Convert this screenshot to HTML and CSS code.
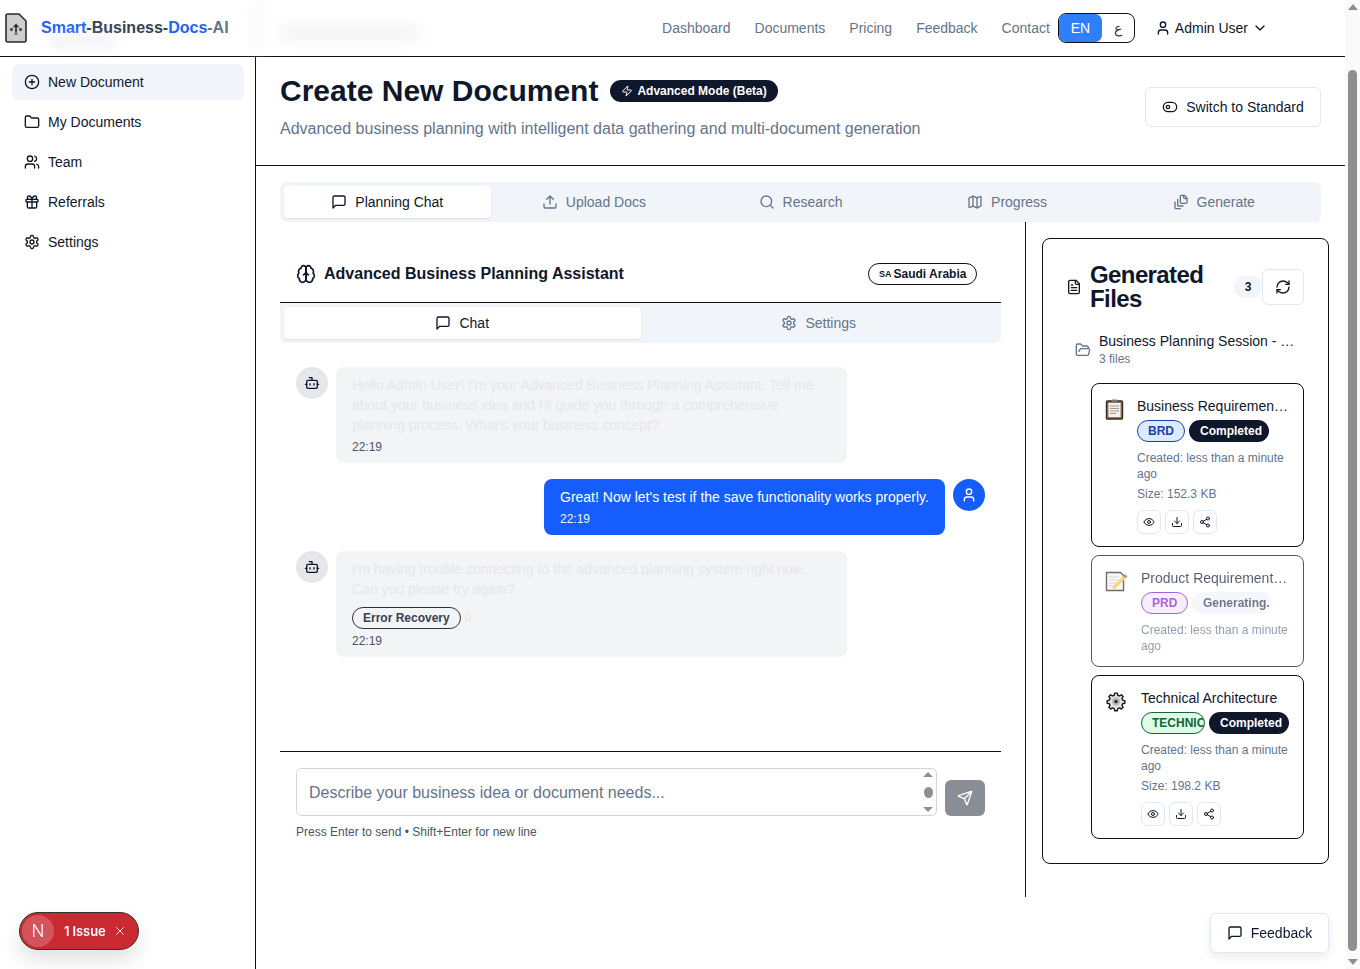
FILE: index.html
```html
<!DOCTYPE html>
<html>
<head>
<meta charset="utf-8">
<title>Smart-Business-Docs-AI</title>
<link rel="stylesheet" href="styles.css">
</head>
<body>

<svg class="sprite" xmlns="http://www.w3.org/2000/svg">
	<symbol id="i-plus" viewBox="0 0 24 24"><circle cx="12" cy="12" r="10"/><path d="M8 12h8M12 8v8"/></symbol>
	<symbol id="i-folder" viewBox="0 0 24 24"><path d="M20 20a2 2 0 0 0 2-2V8a2 2 0 0 0-2-2h-7.9a2 2 0 0 1-1.69-.9L9.6 3.9A2 2 0 0 0 7.93 3H4a2 2 0 0 0-2 2v13a2 2 0 0 0 2 2Z"/></symbol>
	<symbol id="i-users" viewBox="0 0 24 24"><path d="M16 21v-2a4 4 0 0 0-4-4H6a4 4 0 0 0-4 4v2"/><circle cx="9" cy="7" r="4"/><path d="M22 21v-2a4 4 0 0 0-3-3.87M16 3.13a4 4 0 0 1 0 7.75"/></symbol>
	<symbol id="i-gift" viewBox="0 0 24 24"><rect x="3" y="8" width="18" height="4" rx="1"/><path d="M12 8v13M19 12v7a2 2 0 0 1-2 2H7a2 2 0 0 1-2-2v-7M7.5 8a2.5 2.5 0 0 1 0-5A4.8 8 0 0 1 12 8a4.8 8 0 0 1 4.5-5 2.5 2.5 0 0 1 0 5"/></symbol>
	<symbol id="i-settings" viewBox="0 0 24 24"><path d="M12.22 2h-.44a2 2 0 0 0-2 2v.18a2 2 0 0 1-1 1.73l-.43.25a2 2 0 0 1-2 0l-.15-.08a2 2 0 0 0-2.73.73l-.22.38a2 2 0 0 0 .73 2.73l.15.1a2 2 0 0 1 1 1.72v.51a2 2 0 0 1-1 1.74l-.15.09a2 2 0 0 0-.73 2.73l.22.38a2 2 0 0 0 2.73.73l.15-.08a2 2 0 0 1 2 0l.43.25a2 2 0 0 1 1 1.73V20a2 2 0 0 0 2 2h.44a2 2 0 0 0 2-2v-.18a2 2 0 0 1 1-1.73l.43-.25a2 2 0 0 1 2 0l.15.08a2 2 0 0 0 2.73-.73l.22-.39a2 2 0 0 0-.73-2.73l-.15-.08a2 2 0 0 1-1-1.74v-.5a2 2 0 0 1 1-1.74l.15-.09a2 2 0 0 0 .73-2.73l-.22-.38a2 2 0 0 0-2.73-.73l-.15.08a2 2 0 0 1-2 0l-.43-.25a2 2 0 0 1-1-1.73V4a2 2 0 0 0-2-2z"/><circle cx="12" cy="12" r="3"/></symbol>
	<symbol id="i-message" viewBox="0 0 24 24"><path d="M21 15a2 2 0 0 1-2 2H7l-4 4V5a2 2 0 0 1 2-2h14a2 2 0 0 1 2 2z"/></symbol>
	<symbol id="i-upload" viewBox="0 0 24 24"><path d="M21 15v4a2 2 0 0 1-2 2H5a2 2 0 0 1-2-2v-4M17 8l-5-5-5 5M12 3v12"/></symbol>
	<symbol id="i-search" viewBox="0 0 24 24"><circle cx="11" cy="11" r="8"/><path d="m21 21-4.3-4.3"/></symbol>
	<symbol id="i-map" viewBox="0 0 24 24"><path d="M14.106 5.553a2 2 0 0 0 1.788 0l3.659-1.83A1 1 0 0 1 21 4.619v12.764a1 1 0 0 1-.553.894l-4.553 2.277a2 2 0 0 1-1.788 0l-4.212-2.106a2 2 0 0 0-1.788 0l-3.659 1.83A1 1 0 0 1 3 19.381V6.618a1 1 0 0 1 .553-.894l4.553-2.277a2 2 0 0 1 1.788 0z"/><path d="M15 5.764v15M9 3.236v15"/></symbol>
	<symbol id="i-stack" viewBox="0 0 24 24"><path d="M21 7h-3a2 2 0 0 1-2-2V2"/><path d="M21 6v6.5c0 .8-.7 1.5-1.5 1.5h-7c-.8 0-1.5-.7-1.5-1.5v-9c0-.8.7-1.5 1.5-1.5H17Z"/><path d="M7 8v8.8c0 .3.2.6.4.8.2.2.5.4.8.4H15M3 12v8.8c0 .3.2.6.4.8.2.2.5.4.8.4H11"/></symbol>
	<symbol id="i-zap" viewBox="0 0 24 24"><path d="M4 14a1 1 0 0 1-.78-1.63l9.9-10.2a.5.5 0 0 1 .86.46l-1.92 6.02A1 1 0 0 0 13 10h7a1 1 0 0 1 .78 1.63l-9.9 10.2a.5.5 0 0 1-.86-.46l1.92-6.02A1 1 0 0 0 11 14z"/></symbol>
	<symbol id="i-toggle" viewBox="0 0 24 24"><rect x="2" y="5" width="20" height="14" rx="7"/><circle cx="9" cy="12" r="2.5"/></symbol>
	<symbol id="i-brain" viewBox="0 0 24 24"><path d="M12 5a3 3 0 1 0-5.997.125 4 4 0 0 0-2.526 5.77 4 4 0 0 0 .556 6.588A4 4 0 1 0 12 18Z"/><path d="M12 5a3 3 0 1 1 5.997.125 4 4 0 0 1 2.526 5.77 4 4 0 0 1-.556 6.588A4 4 0 1 1 12 18Z"/><path d="M15 13a4.5 4.5 0 0 1-3-4 4.5 4.5 0 0 1-3 4M12 9v9"/></symbol>
	<symbol id="i-bot" viewBox="0 0 24 24"><path d="M12 8V4H8"/><rect x="4" y="8" width="16" height="12" rx="2"/><path d="M2 14h2M20 14h2M15 13v2M9 13v2"/></symbol>
	<symbol id="i-user" viewBox="0 0 24 24"><path d="M19 21v-2a4 4 0 0 0-4-4H9a4 4 0 0 0-4 4v2"/><circle cx="12" cy="7" r="4"/></symbol>
	<symbol id="i-send" viewBox="0 0 24 24"><path d="M14.536 21.686a.5.5 0 0 0 .937-.024l6.5-19a.496.496 0 0 0-.635-.635l-19 6.5a.5.5 0 0 0-.024.937l7.93 3.18a2 2 0 0 1 1.112 1.11z"/><path d="m21.854 2.147-10.94 10.939"/></symbol>
	<symbol id="i-file" viewBox="0 0 24 24"><path d="M15 2H6a2 2 0 0 0-2 2v16a2 2 0 0 0 2 2h12a2 2 0 0 0 2-2V7Z"/><path d="M14 2v4a2 2 0 0 0 2 2h4M10 9H8M16 13H8M16 17H8"/></symbol>
	<symbol id="i-refresh" viewBox="0 0 24 24"><path d="M3 12a9 9 0 0 1 9-9 9.75 9.75 0 0 1 6.74 2.74L21 8"/><path d="M21 3v5h-5"/><path d="M21 12a9 9 0 0 1-9 9 9.75 9.75 0 0 1-6.74-2.74L3 16"/><path d="M8 16H3v5"/></symbol>
	<symbol id="i-open" viewBox="0 0 24 24"><path d="m6 14 1.5-2.9A2 2 0 0 1 9.24 10H20a2 2 0 0 1 1.94 2.5l-1.54 6a2 2 0 0 1-1.95 1.5H4a2 2 0 0 1-2-2V5a2 2 0 0 1 2-2h3.9a2 2 0 0 1 1.69.9l.81 1.2a2 2 0 0 0 1.67.9H18a2 2 0 0 1 2 2v2"/></symbol>
	<symbol id="i-eye" viewBox="0 0 24 24"><path d="M2.062 12.348a1 1 0 0 1 0-.696 10.75 10.75 0 0 1 19.876 0 1 1 0 0 1 0 .696 10.75 10.75 0 0 1-19.876 0"/><circle cx="12" cy="12" r="3"/></symbol>
	<symbol id="i-download" viewBox="0 0 24 24"><path d="M21 15v4a2 2 0 0 1-2 2H5a2 2 0 0 1-2-2v-4M7 10l5 5 5-5M12 15V3"/></symbol>
	<symbol id="i-share" viewBox="0 0 24 24"><circle cx="18" cy="5" r="3"/><circle cx="6" cy="12" r="3"/><circle cx="18" cy="19" r="3"/><path d="m8.59 13.51 6.83 3.98M15.41 6.51l-6.82 3.98"/></symbol>
	<symbol id="i-chevron" viewBox="0 0 24 24"><path d="m6 9 6 6 6-6"/></symbol>
	<symbol id="i-x" viewBox="0 0 24 24"><path d="M18 6 6 18M6 6l12 12"/></symbol>
</svg>

<div class="app">
	<div class="page">

		<header class="topbar">
			<div class="logo">
				<svg class="logo-mark" viewBox="0 0 22 30">
					<path d="M3 1h11l7 7v19a2 2 0 0 1-2 2H3a2 2 0 0 1-2-2V3a2 2 0 0 1 2-2z" fill="#cfcfcf" stroke="#2b2b2b" stroke-width="1.6"/>
					<path d="M11 10.500l3.200 3.700h-6.400z" fill="#2b2b2b"/>
					<path d="M11 14v5" stroke="#444" stroke-width="2"/>
					<circle cx="6.500" cy="16.500" r="1.700" fill="#555"/>
					<circle cx="15.500" cy="16.500" r="1.700" fill="#555"/>
					<circle cx="11" cy="20.500" r="1.500" fill="#666"/>
				</svg>
				<span class="brand"><b class="blue">Smart</b><b class="slate">-Business-</b><b class="blue">Docs</b><b class="grey">-AI</b></span>
			</div>
			<div class="logo-smudge"></div>
			<div class="edge-smudge"></div>
			<div class="top-smudge"></div>
			<nav class="topnav">
				<a>Dashboard</a>
				<a>Documents</a>
				<a>Pricing</a>
				<a>Feedback</a>
				<a>Contact</a>
			</nav>
			<div class="lang">
				<span class="lang-on">EN</span>
				<span class="lang-off">ع</span>
			</div>
			<div class="account">
				<svg class="i"><use href="#i-user"/></svg>
				<span>Admin User</span>
				<svg class="i"><use href="#i-chevron"/></svg>
			</div>
		</header>

		<div class="body">
			<aside class="sidebar">
				<a class="side-item active"><svg class="i"><use href="#i-plus"/></svg>New Document</a>
				<a class="side-item"><svg class="i"><use href="#i-folder"/></svg>My Documents</a>
				<a class="side-item"><svg class="i"><use href="#i-users"/></svg>Team</a>
				<a class="side-item"><svg class="i"><use href="#i-gift"/></svg>Referrals</a>
				<a class="side-item"><svg class="i"><use href="#i-settings"/></svg>Settings</a>
			</aside>

			<main class="main">
				<div class="main-head">
					<div>
						<div class="title-row">
							<h1>Create New Document</h1>
							<span class="beta"><svg class="i"><use href="#i-zap"/></svg>Advanced Mode (Beta)</span>
						</div>
						<p class="subtitle">Advanced business planning with intelligent data gathering and multi-document generation</p>
					</div>
					<button class="switch"><svg class="i"><use href="#i-toggle"/></svg>Switch to Standard</button>
				</div>

				<div class="content">
					<div class="tabs">
						<div class="tab active"><svg class="i"><use href="#i-message"/></svg>Planning Chat</div>
						<div class="tab"><svg class="i"><use href="#i-upload"/></svg>Upload Docs</div>
						<div class="tab"><svg class="i"><use href="#i-search"/></svg>Research</div>
						<div class="tab"><svg class="i"><use href="#i-map"/></svg>Progress</div>
						<div class="tab"><svg class="i"><use href="#i-stack"/></svg>Generate</div>
					</div>

					<div class="workspace">
						<section class="chat-col">
							<div class="chat-head">
								<h2><svg class="i brain"><use href="#i-brain"/></svg>Advanced Business Planning Assistant</h2>
								<span class="country"><small>SA</small>Saudi Arabia</span>
							</div>
							<div class="subtabs">
								<div class="tab active"><svg class="i"><use href="#i-message"/></svg>Chat</div>
								<div class="tab"><svg class="i"><use href="#i-settings"/></svg>Settings</div>
							</div>

							<div class="messages">
								<div class="msg">
									<div class="avatar"><svg class="i"><use href="#i-bot"/></svg></div>
									<div class="bubble">
										<p>Hello Admin User! I'm your Advanced Business Planning Assistant. Tell me about your business idea and I'll guide you through a comprehensive planning process. What's your business concept?</p>
										<div class="time">22:19</div>
									</div>
								</div>
								<div class="msg mine">
									<div class="bubble">
										<p>Great! Now let's test if the save functionality works properly.</p>
										<div class="time">22:19</div>
									</div>
									<div class="avatar"><svg class="i"><use href="#i-user"/></svg></div>
								</div>
								<div class="msg">
									<div class="avatar"><svg class="i"><use href="#i-bot"/></svg></div>
									<div class="bubble">
										<p>I'm having trouble connecting to the advanced planning system right now. Can you please try again?</p>
										<div class="recovery"><span class="pill-tag">Error Recovery</span><span class="zero">0</span></div>
										<div class="time">22:19</div>
									</div>
								</div>
							</div>

							<div class="composer">
								<div class="composer-row">
									<div class="field">
										<textarea placeholder="Describe your business idea or document needs..."></textarea>
										<div class="field-scroll"><i class="up"></i><i class="dot"></i><i class="down"></i></div>
									</div>
									<button class="send"><svg class="i"><use href="#i-send"/></svg></button>
								</div>
								<p class="hint">Press Enter to send • Shift+Enter for new line</p>
							</div>
						</section>

						<aside class="files">
							<div class="files-head">
								<svg class="i"><use href="#i-file"/></svg>
								<h3>Generated Files</h3>
								<span class="count">3</span>
								<button class="refresh"><svg class="i"><use href="#i-refresh"/></svg></button>
							</div>

							<div class="session">
								<svg class="i"><use href="#i-open"/></svg>
								<div class="session-text">
									<div class="session-name">Business Planning Session - 22:19</div>
									<div class="session-count">3 files</div>
								</div>
							</div>

							<div class="cards">
								<div class="card">
									<svg class="doc-icon" viewBox="0 0 21 24">
										<rect x="2.500" y="5" width="16" height="18" rx="1" fill="#a8754a" stroke="#2f2a26" stroke-width="1.400"/>
										<rect x="4.500" y="7" width="12" height="14" fill="#f1f1ee"/>
										<path d="M6 10h9M6 12.500h9M6 15h9M6 17.500h6" stroke="#9a9a9a" stroke-width="1"/>
										<rect x="7.500" y="3.500" width="6" height="3" rx="1" fill="#777"/>
									</svg>
									<div class="card-body">
										<div class="card-title">Business Requirements Document</div>
										<div class="tags"><span class="tag brd">BRD</span><span class="tag done">Completed</span></div>
										<div class="meta">Created: less than a minute ago</div>
										<div class="meta size">Size: 152.3 KB</div>
										<div class="actions">
											<button><svg class="i"><use href="#i-eye"/></svg></button>
											<button><svg class="i"><use href="#i-download"/></svg></button>
											<button><svg class="i"><use href="#i-share"/></svg></button>
										</div>
									</div>
								</div>

								<div class="card busy">
									<svg class="doc-icon wide" viewBox="0 0 25 24">
										<path d="M2.500 4.500h14l3 3v15h-17z" fill="#f6f6f4" stroke="#2f2f2f" stroke-width="1.400"/>
										<path d="M5 9h10M5 12h10M5 15h7M5 18h5" stroke="#c4c4c4" stroke-width="1"/>
										<path d="M9 18l10-10 2.500 2.500-10 10-3.500 1z" fill="#f5c64f"/>
										<path d="M19 8l2-2 2.500 2.500-2 2z" fill="#b3635c"/>
									</svg>
									<div class="card-body">
										<div class="card-title">Product Requirements Document</div>
										<div class="tags"><span class="tag prd">PRD</span><span class="tag generating">Generating.</span></div>
										<div class="meta">Created: less than a minute ago</div>
									</div>
								</div>

								<div class="card">
									<svg class="doc-icon wide" viewBox="0 0 25 24">
										<g transform="translate(12 13.500) scale(.84) translate(-12.500 -12)">
											<path d="M11 2h3l.6 2.600 2 .8 2.300-1.400 2.100 2.100-1.400 2.300.8 2 2.600.6v3l-2.600.6-.8 2 1.400 2.300-2.100 2.100-2.300-1.400-2 .8-.6 2.600h-3l-.6-2.600-2-.8-2.300 1.400-2.100-2.100 1.400-2.300-.8-2-2.600-.6v-3l2.600-.6.8-2-1.400-2.300 2.100-2.100 2.300 1.400 2-.8z" fill="#e4e4e4" stroke="#1c1c1c" stroke-width="1.700" stroke-linejoin="round"/>
											<circle cx="12.500" cy="12" r="5" fill="#bdbdbd"/>
											<circle cx="12.500" cy="12" r="2.200" fill="#333"/>
										</g>
									</svg>
									<div class="card-body">
										<div class="card-title">Technical Architecture</div>
										<div class="tags"><span class="tag tech">TECHNICAL</span><span class="tag done">Completed</span></div>
										<div class="meta">Created: less than a minute ago</div>
										<div class="meta size">Size: 198.2 KB</div>
										<div class="actions">
											<button><svg class="i"><use href="#i-eye"/></svg></button>
											<button><svg class="i"><use href="#i-download"/></svg></button>
											<button><svg class="i"><use href="#i-share"/></svg></button>
										</div>
									</div>
								</div>
							</div>
						</aside>
					</div>
				</div>
			</main>
		</div>
	</div>

	<div class="scrollbar">
		<i class="arrow-up"></i>
		<div class="thumb"></div>
		<i class="arrow-down"></i>
	</div>
</div>

<div class="issues">
	<span class="issues-n">N</span>
	<span class="issues-text">1 Issue</span>
	<svg class="i"><use href="#i-x"/></svg>
</div>

<button class="feedback"><svg class="i"><use href="#i-message"/></svg>Feedback</button>

</body>
</html>
```

FILE: styles.css
```css
* {
	box-sizing: border-box;
}

html, body {
	height: 100%;
}

body, h1, h2, h3, p {
	margin: 0;
	padding: 0;
}

body {
	font-family: "Liberation Sans", Arial, sans-serif;
	font-size: 14px;
	line-height: 20px;
	color: #0f172a;
	background: #fff;
	overflow: hidden;
}

button {
	font: inherit;
	color: inherit;
	background: #fff;
	cursor: pointer;
}

.sprite {
	display: none;
}

.i {
	width: 16px;
	height: 16px;
	flex-shrink: 0;
	fill: none;
	stroke: currentColor;
	stroke-width: 2;
	stroke-linecap: round;
	stroke-linejoin: round;
}

.app {
	display: flex;
	height: 969px;
}

.page {
	flex: 1;
	min-width: 0;
	display: flex;
	flex-direction: column;
}

/* top bar */
.topbar {
	position: relative;
	height: 57px;
	flex-shrink: 0;
	display: flex;
	align-items: center;
	padding: 0 77px 0 5px;
	border-bottom: 1px solid #111;
}

.logo {
	display: flex;
	align-items: center;
	gap: 14px;
}

.logo-mark {
	width: 22px;
	height: 30px;
}

.brand {
	font-size: 16px;
	line-height: 24px;
}

.brand b {
	font-weight: 700;
}

.blue { color: #1d63f5; }
.slate { color: #334155; }
.grey { color: #64748b; }

.top-smudge {
	position: absolute;
	left: 280px;
	top: 25px;
	width: 140px;
	height: 16px;
	background: #e5e7eb;
	filter: blur(7px);
	opacity: .45;
}

.logo-smudge {
	position: absolute;
	left: 50px;
	top: 37px;
	width: 65px;
	height: 10px;
	background: #e5e7eb;
	filter: blur(6px);
	opacity: .6;
}

.edge-smudge {
	position: absolute;
	left: 250px;
	top: 0;
	width: 14px;
	height: 54px;
	background: #f3f4f6;
	filter: blur(4px);
	opacity: .4;
}

.topnav {
	margin-left: auto;
	display: flex;
	gap: 24px;
	color: #64748b;
}

.lang {
	margin-left: 8px;
	width: 77px;
	height: 30px;
	display: flex;
	align-items: center;
	border: 1px solid #111;
	border-radius: 8px;
}

.lang-on {
	width: 43px;
	height: 28px;
	display: flex;
	align-items: center;
	justify-content: center;
	background: #2f7ffb;
	color: #fff;
	font-weight: 500;
	border-radius: 7px;
}

.lang-off {
	flex: 1;
	text-align: center;
	color: #334155;
}

.account {
	margin-left: 20px;
	display: flex;
	align-items: center;
	gap: 4px;
}

.body {
	flex: 1;
	min-height: 0;
	display: flex;
}

/* sidebar */
.sidebar {
	width: 256px;
	flex-shrink: 0;
	border-right: 1px solid #111;
	padding: 7px 11px 0 12px;
	display: flex;
	flex-direction: column;
	gap: 4px;
}

.side-item {
	height: 36px;
	display: flex;
	align-items: center;
	gap: 8px;
	padding: 0 12px;
	border-radius: 8px;
}

.side-item.active {
	background: #f1f5f9;
}

/* main */
.main {
	flex: 1;
	min-width: 0;
}

.main-head {
	height: 109px;
	padding: 16px 24px 24px;
	display: flex;
	align-items: center;
	justify-content: space-between;
	border-bottom: 1px solid #111;
}

.title-row {
	display: flex;
	align-items: center;
	gap: 12px;
}

h1 {
	font-size: 30px;
	line-height: 36px;
	font-weight: 700;
}

.beta {
	height: 22px;
	display: flex;
	align-items: center;
	gap: 4px;
	padding: 0 11px;
	border-radius: 11px;
	background: #0f172a;
	color: #fff;
	font-size: 12px;
	line-height: 16px;
	font-weight: 700;
}

.beta .i {
	width: 12px;
	height: 12px;
}

.subtitle {
	margin-top: 8px;
	font-size: 16px;
	line-height: 24px;
	color: #64748b;
}

.switch {
	width: 176px;
	height: 40px;
	display: flex;
	align-items: center;
	justify-content: center;
	gap: 8px;
	border: 1px solid #e2e8f0;
	border-radius: 6px;
}

.content {
	padding: 16px 24px 0;
}

.tabs {
	height: 40px;
	padding: 4px;
	display: grid;
	grid-template-columns: repeat(5, 1fr);
	background: #f1f5f9;
	border-radius: 6px;
}

.tab {
	display: flex;
	align-items: center;
	justify-content: center;
	gap: 8px;
	color: #64748b;
	border-radius: 4px;
}

.tab.active {
	background: #fff;
	color: #0f172a;
	box-shadow: 0 1px 2px rgba(0,0,0,.08);
}

.workspace {
	display: grid;
	grid-template-columns: 746px 287px;
	gap: 16px;
	align-items: start;
}

/* chat column */
.chat-col {
	height: 675px;
	padding-right: 24px;
	border-right: 1px solid #111;
	display: flex;
	flex-direction: column;
}

.chat-head {
	height: 81px;
	flex-shrink: 0;
	padding: 24px 24px 0 16px;
	display: flex;
	align-items: center;
	justify-content: space-between;
	border-bottom: 1px solid #111;
}

h2 {
	display: flex;
	align-items: center;
	gap: 8px;
	font-size: 16px;
	line-height: 24px;
	font-weight: 700;
}

.brain {
	width: 20px;
	height: 20px;
}

.country {
	width: 109px;
	height: 22px;
	display: flex;
	align-items: center;
	gap: 2px;
	padding-left: 10px;
	border: 1px solid #111;
	border-radius: 11px;
	font-size: 12px;
	font-weight: 700;
}

.country small {
	font-size: 9px;
	font-weight: 700;
}

.subtabs {
	height: 40px;
	flex-shrink: 0;
	padding: 4px;
	display: grid;
	grid-template-columns: 1fr 1fr;
	background: #f1f5f9;
	border-radius: 0 0 6px 6px;
}

.messages {
	flex: 1;
	padding: 24px 16px;
	display: flex;
	flex-direction: column;
	gap: 16px;
}

.msg {
	display: flex;
	gap: 8px;
	align-items: flex-start;
}

.msg.mine {
	justify-content: flex-end;
}

.avatar {
	width: 32px;
	height: 32px;
	flex-shrink: 0;
	display: flex;
	align-items: center;
	justify-content: center;
	border-radius: 50%;
	background: #e5e7eb;
}

.mine .avatar {
	background: #155dfc;
	color: #fff;
}

.bubble {
	width: 511px;
	padding: 8px 16px;
	border-radius: 8px;
	background: #f3f4f6;
	color: #e5e7eb;
}

.mine .bubble {
	width: 401px;
	background: #155dfc;
	color: #fff;
}

.time {
	margin-top: 4px;
	font-size: 12px;
	line-height: 16px;
	color: #4b5563;
}

.mine .time {
	color: #eef2ff;
}

.recovery {
	margin-top: 8px;
	display: flex;
	align-items: center;
	gap: 4px;
}

.pill-tag {
	height: 22px;
	display: flex;
	align-items: center;
	padding: 0 10px;
	border: 1px solid #333;
	border-radius: 11px;
	color: #374151;
	font-size: 12px;
	font-weight: 700;
}

.zero {
	font-size: 12px;
}

.composer {
	flex-shrink: 0;
	height: 146px;
	padding: 16px;
	border-top: 1px solid #111;
}

.composer-row {
	display: flex;
	align-items: flex-end;
	gap: 8px;
}

.field {
	position: relative;
	flex: 1;
	height: 48px;
}

.field textarea {
	display: block;
	width: 100%;
	height: 48px;
	padding: 12px;
	border: 1px solid #d1d5db;
	border-radius: 6px;
	font: 16px/24px "Liberation Sans", Arial, sans-serif;
	resize: none;
	overflow: hidden;
	outline: none;
}

.field textarea::placeholder {
	color: #64748b;
	opacity: 1;
}

.field-scroll {
	position: absolute;
	top: 4px;
	right: 4px;
	bottom: 4px;
	width: 10px;
	display: flex;
	flex-direction: column;
	align-items: center;
	justify-content: space-between;
}

.field-scroll .dot {
	width: 9px;
	height: 11px;
	border-radius: 50%;
	background: #8f8f8f;
}

.field-scroll .up,
.field-scroll .down {
	width: 0;
	height: 0;
	border-left: 5px solid transparent;
	border-right: 5px solid transparent;
}

.field-scroll .up { border-bottom: 5px solid #8f8f8f; }
.field-scroll .down { border-top: 5px solid #8f8f8f; }

.send {
	width: 40px;
	height: 36px;
	display: flex;
	align-items: center;
	justify-content: center;
	border: 0;
	border-radius: 6px;
	background: #898e96;
	color: #fff;
}

.hint {
	margin-top: 8px;
	font-size: 12px;
	line-height: 16px;
	color: #4b5563;
}

/* generated files */
.files {
	margin-top: 16px;
	padding: 24px;
	border: 1px solid #111;
	border-radius: 8px;
}

.files-head {
	display: flex;
	align-items: center;
}

.files-head > .i {
	margin-left: -1px;
}

h3 {
	flex: 1;
	margin-left: 8px;
	font-size: 24px;
	line-height: 24px;
	font-weight: 700;
	letter-spacing: -.6px;
}

.count {
	width: 28px;
	height: 22px;
	display: flex;
	align-items: center;
	justify-content: center;
	border-radius: 11px;
	background: #f1f5f9;
	font-size: 12px;
	font-weight: 700;
}

.refresh {
	width: 42px;
	height: 36px;
	display: flex;
	align-items: center;
	justify-content: center;
	border: 1px solid #e2e8f0;
	border-radius: 6px;
}

.session {
	margin-top: 12px;
	padding: 8px;
	display: flex;
	align-items: center;
	gap: 8px;
}

.session > .i {
	color: #64748b;
	margin-top: 2px;
}

.session-text {
	min-width: 0;
}

.session-name {
	white-space: nowrap;
	overflow: hidden;
	text-overflow: ellipsis;
}

.session-count {
	font-size: 12px;
	line-height: 16px;
	color: #64748b;
}

.cards {
	margin: 8px 0 0 24px;
	display: flex;
	flex-direction: column;
	gap: 8px;
}

.card {
	padding: 12px;
	display: flex;
	gap: 12px;
	border: 1px solid #111;
	border-radius: 8px;
}

.card.busy {
	opacity: .7;
}

.doc-icon {
	width: 21px;
	height: 24px;
	flex-shrink: 0;
}

.doc-icon.wide {
	width: 25px;
}

.card-body {
	flex: 1;
	min-width: 0;
}

.card-title {
	white-space: nowrap;
	overflow: hidden;
	text-overflow: ellipsis;
}

.tags {
	margin-top: 4px;
	display: flex;
	gap: 4px;
}

.tag {
	height: 22px;
	display: flex;
	align-items: center;
	flex-shrink: 0;
	padding-left: 10px;
	border: 1px solid transparent;
	border-radius: 11px;
	font-size: 12px;
	font-weight: 700;
	white-space: nowrap;
	overflow: hidden;
}

.brd {
	width: 48px;
	background: #dbeafe;
	border-color: #1e40af;
	color: #1e40af;
}

.prd {
	width: 47px;
	background: #f3e8ff;
	border-color: #7e22ce;
	color: #7e22ce;
}

.tech {
	width: 64px;
	background: #dcfce7;
	border-color: #166534;
	color: #166534;
}

.done {
	width: 80px;
	background: #0f172a;
	color: #fff;
}

.generating {
	width: 80px;
	background: #f1f5f9;
	color: #334155;
}

.meta {
	margin-top: 8px;
	font-size: 12px;
	line-height: 16px;
	color: #64748b;
}

.meta.size {
	margin-top: 4px;
}

.actions {
	margin-top: 8px;
	display: flex;
	gap: 4px;
}

.actions button {
	width: 24px;
	height: 24px;
	padding: 0;
	display: flex;
	align-items: center;
	justify-content: center;
	border: 1px solid #e2e8f0;
	border-radius: 6px;
}

.actions .i {
	width: 12px;
	height: 12px;
}

/* fake browser scrollbar */
.scrollbar {
	width: 15px;
	flex-shrink: 0;
	display: flex;
	flex-direction: column;
	align-items: center;
	padding: 4px 0;
	background: #fafafa;
}

.arrow-up,
.arrow-down {
	width: 0;
	height: 0;
	border-left: 5px solid transparent;
	border-right: 5px solid transparent;
}

.arrow-up { border-bottom: 6px solid #8f8f8f; }
.arrow-down { border-top: 6px solid #8f8f8f; }

.thumb {
	width: 9px;
	flex: 1;
	margin: 60px 0 8px;
	border-radius: 5px;
	background: #8f8f8f;
}

/* floating bits */
.issues {
	position: fixed;
	left: 19px;
	top: 912px;
	width: 120px;
	height: 38px;
	display: flex;
	align-items: center;
	padding: 0 3px 0 2px;
	border: 1px solid #333;
	border-radius: 19px;
	background: #c92a32;
	color: #fff;
	font-family: Inter, "Liberation Sans", sans-serif;
	box-shadow: 0 10px 20px rgba(0,0,0,.12);
}

.issues-n {
	width: 32px;
	height: 32px;
	display: flex;
	align-items: center;
	justify-content: center;
	border-radius: 50%;
	background: rgba(255,255,255,.2);
	font-size: 17px;
	font-weight: 300;
}

.issues-text {
	margin: 0 7px 0 10px;
	font-size: 13px;
	font-weight: 600;
	letter-spacing: -.1px;
}

.issues .i {
	width: 14px;
	height: 14px;
	stroke-width: 1.5;
}

.feedback {
	position: fixed;
	left: 1210px;
	top: 913px;
	width: 119px;
	height: 40px;
	display: flex;
	align-items: center;
	justify-content: center;
	gap: 8px;
	border: 1px solid #e2e8f0;
	border-radius: 6px;
	box-shadow: 0 4px 10px rgba(0,0,0,.08);
}
```
